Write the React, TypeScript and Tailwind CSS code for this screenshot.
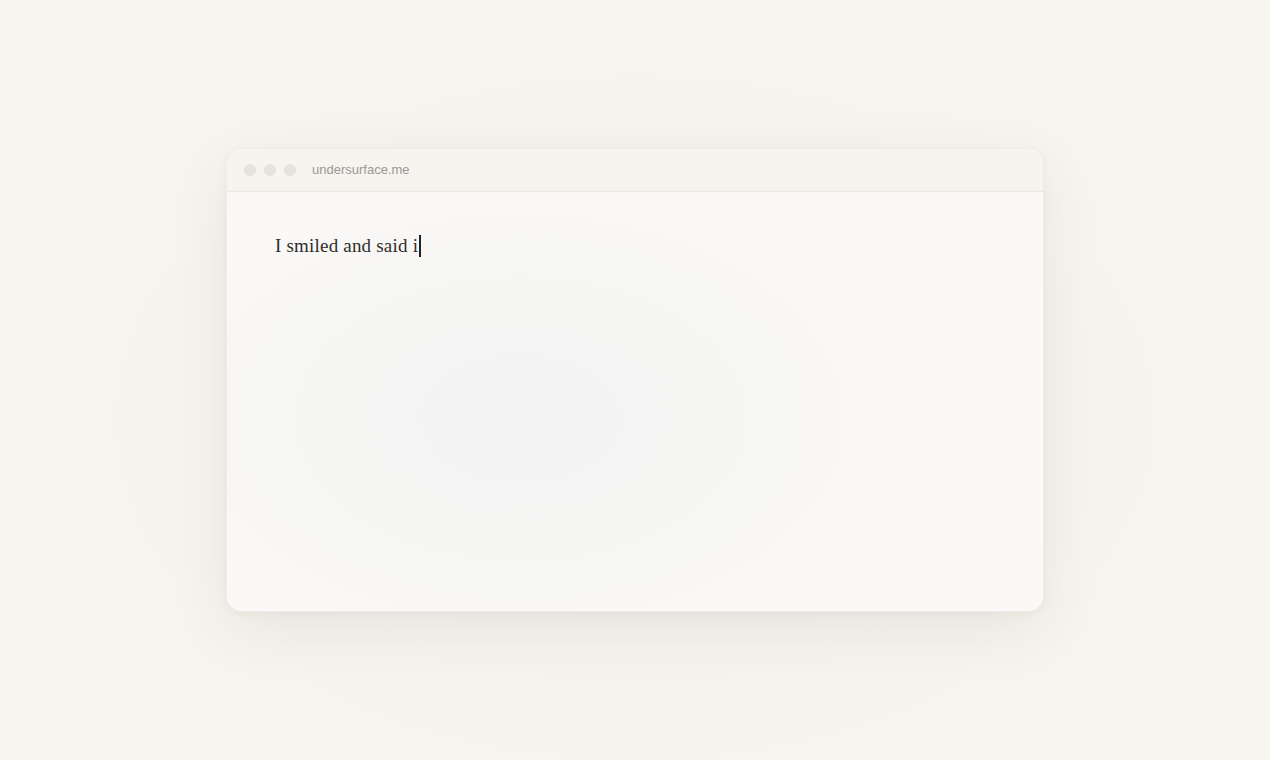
import React from 'react';

export default function App() {
  return (
    <div className="min-h-screen w-full flex items-center justify-center bg-[#f8f5f0] bg-[radial-gradient(ellipse_at_50%_55%,#f2efea_0%,#f6f3ee_40%,#f8f5f0_70%)]" style={{ fontFamily: '"Liberation Sans", Arial, sans-serif' }}>
      {/* Browser window */}
      <div className="w-[818px] h-[464px] rounded-[16px] overflow-hidden flex flex-col bg-[#faf9f7] border border-[#efece7] shadow-[0_18px_60px_rgba(60,50,40,0.08),0_2px_8px_rgba(60,50,40,0.04)]">
        {/* Title bar */}
        <div className="h-[43px] shrink-0 flex items-center gap-2 px-[17px] bg-[#f7f4ef] border-b border-[#ebe8e3]">
          <div className="flex items-center gap-2">
            <span className="w-3 h-3 rounded-full bg-[#e6e3df]" />
            <span className="w-3 h-3 rounded-full bg-[#e6e3df]" />
            <span className="w-3 h-3 rounded-full bg-[#e6e3df]" />
          </div>
          <span className="ml-[8px] text-[13px] text-[#9a9894]">undersurface.me</span>
        </div>

        {/* Writing surface */}
        <div className="flex-1 px-[48px] pt-[40px] bg-[radial-gradient(ellipse_380px_240px_at_36%_54%,#f3f3f3_0%,#f5f5f4_45%,#f8f7f5_80%,#faf9f7_100%)]">
          <p className="flex items-center text-[19px] text-[#2f2d2b] tracking-[0.2px]" style={{ fontFamily: '"Liberation Serif", "Times New Roman", serif' }}>
            I smiled and said i
            <span className="inline-block w-[2px] h-[22px] bg-[#222] ml-[1px]" />
          </p>
        </div>
      </div>
    </div>
  );
}
